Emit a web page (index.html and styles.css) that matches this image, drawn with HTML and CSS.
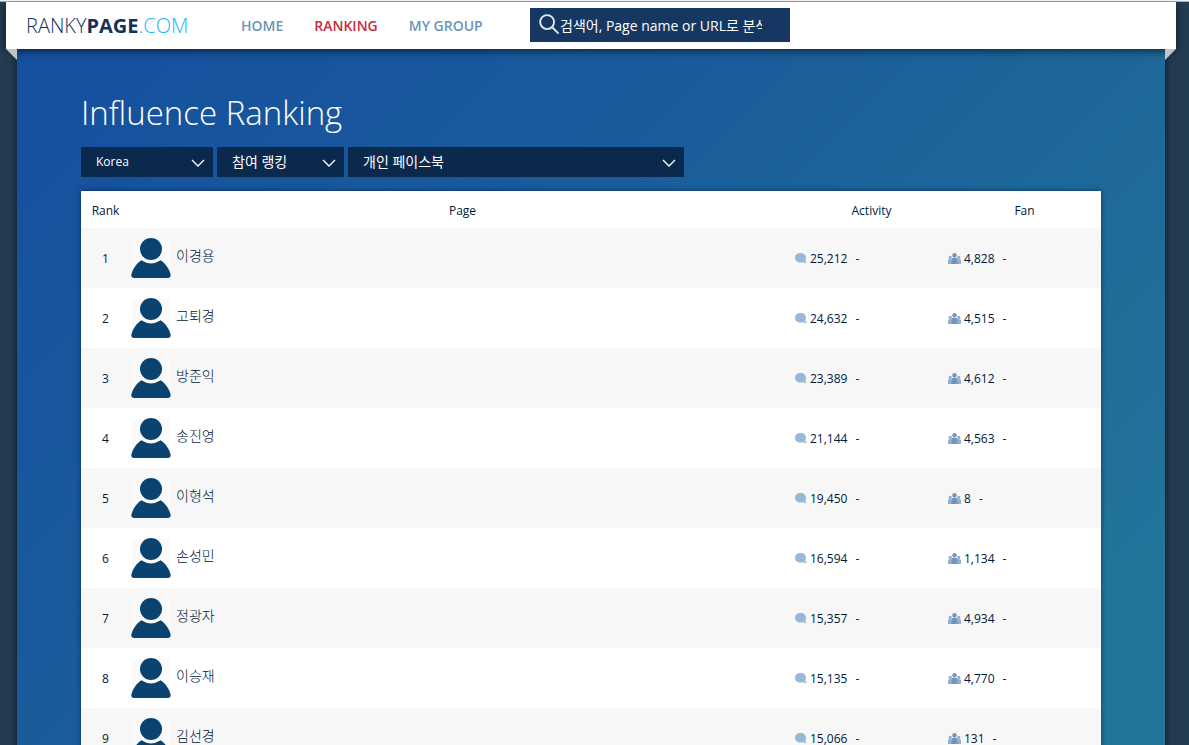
FILE: index.html
```html
<!DOCTYPE html>
<html lang="ko">
<head>
<meta charset="utf-8">
<title>RankyPage.com - Influence Ranking</title>
<link rel="stylesheet" href="styles.css">
</head>
<body>
<svg class="sprite" aria-hidden="true">
  <symbol id="person" viewBox="0 0 40 40">
    <rect width="38" height="40" x="1" y="1" fill="#fafafa"/>
    <circle cx="20" cy="11" r="11"/>
    <path d="M10.300 22.300Q20 28.500 29.700 22.300C35 26 38.500 31.500 39.700 37Q39.900 40 36.500 40H3.500Q.1 40 .3 37C1.500 31.500 5 26 10.300 22.300Z"/>
  </symbol>
  <symbol id="bubble" viewBox="0 0 12 11">
    <path d="M5.500 0C8.700 0 11 2 11 4.700C11 6.200 10.600 7 10 7.800L12 9.800C10.500 10 9 9.800 8 9.200C3.500 10.500 0 8 0 4.700C0 2 2.300 0 5.500 0Z"/>
  </symbol>
  <symbol id="group" viewBox="0 0 13 11">
    <g fill="#94afcd"><circle cx="2.300" cy="4.500" r="1.700"/><circle cx="10.700" cy="4.500" r="1.700"/><path d="M0 11V7.300Q0 6.200 1.200 6.200H4V11ZM9 11V6.200H11.800Q13 6.200 13 7.300V11Z"/></g>
    <circle cx="6.500" cy="2.200" r="2.200"/><path d="M3.600 11V6.500Q3.600 4.800 5.200 4.800H7.800Q9.400 4.800 9.400 6.500V11Z"/>
  </symbol>
  <symbol id="chevron" viewBox="0 0 14 8"><path d="M1 1L7 7L13 1" fill="none" stroke="#fff" stroke-width="1.300"/></symbol>
</svg>
<div class="page">
  <header class="topbar">
    <a class="logo" href="#">RANKY<b>PAGE</b><span class="logo-tld">.COM</span></a>
    <nav class="menu">
      <a href="#">HOME</a>
      <a class="active" href="#">RANKING</a>
      <a href="#">MY GROUP</a>
    </nav>
    <form class="search">
      <svg class="search-icon" viewBox="0 0 22 22" aria-hidden="true"><circle cx="8.500" cy="8.500" r="7.300"/><path d="M13.600 13.600L20.500 20.500"/></svg>
      <input type="text" aria-label="Search" placeholder="검색어, Page name or URL로 분석">
    </form>
  </header>
  <main class="content">
    <h1>Influence Ranking</h1>
    <div class="filters">
      <label class="filter filter-country"><select aria-label="Country"><option>Korea</option></select><svg><use href="#chevron"/></svg></label>
      <label class="filter filter-ranking"><select aria-label="Ranking"><option>참여 랭킹</option></select><svg><use href="#chevron"/></svg></label>
      <label class="filter filter-category"><select aria-label="Category"><option>개인 페이스북</option></select><svg><use href="#chevron"/></svg></label>
    </div>
    <table class="ranking">
      <thead><tr><th class="col-rank">Rank</th><th>Page</th><th class="col-stat">Activity</th><th class="col-stat">Fan</th></tr></thead>
      <tbody>
        <tr><td class="rank">1</td><td><a class="person" href="#"><svg><use href="#person"/></svg><span>이경용</span></a></td><td><span class="stat"><svg class="bubble"><use href="#bubble"/></svg><span>25,212</span><i>-</i></span></td><td><span class="stat"><svg class="group"><use href="#group"/></svg><span>4,828</span><i>-</i></span></td></tr>
        <tr><td class="rank">2</td><td><a class="person" href="#"><svg><use href="#person"/></svg><span>고퇴경</span></a></td><td><span class="stat"><svg class="bubble"><use href="#bubble"/></svg><span>24,632</span><i>-</i></span></td><td><span class="stat"><svg class="group"><use href="#group"/></svg><span>4,515</span><i>-</i></span></td></tr>
        <tr><td class="rank">3</td><td><a class="person" href="#"><svg><use href="#person"/></svg><span>방준익</span></a></td><td><span class="stat"><svg class="bubble"><use href="#bubble"/></svg><span>23,389</span><i>-</i></span></td><td><span class="stat"><svg class="group"><use href="#group"/></svg><span>4,612</span><i>-</i></span></td></tr>
        <tr><td class="rank">4</td><td><a class="person" href="#"><svg><use href="#person"/></svg><span>송진영</span></a></td><td><span class="stat"><svg class="bubble"><use href="#bubble"/></svg><span>21,144</span><i>-</i></span></td><td><span class="stat"><svg class="group"><use href="#group"/></svg><span>4,563</span><i>-</i></span></td></tr>
        <tr><td class="rank">5</td><td><a class="person" href="#"><svg><use href="#person"/></svg><span>이형석</span></a></td><td><span class="stat"><svg class="bubble"><use href="#bubble"/></svg><span>19,450</span><i>-</i></span></td><td><span class="stat"><svg class="group"><use href="#group"/></svg><span>8</span><i>-</i></span></td></tr>
        <tr><td class="rank">6</td><td><a class="person" href="#"><svg><use href="#person"/></svg><span>손성민</span></a></td><td><span class="stat"><svg class="bubble"><use href="#bubble"/></svg><span>16,594</span><i>-</i></span></td><td><span class="stat"><svg class="group"><use href="#group"/></svg><span>1,134</span><i>-</i></span></td></tr>
        <tr><td class="rank">7</td><td><a class="person" href="#"><svg><use href="#person"/></svg><span>정광자</span></a></td><td><span class="stat"><svg class="bubble"><use href="#bubble"/></svg><span>15,357</span><i>-</i></span></td><td><span class="stat"><svg class="group"><use href="#group"/></svg><span>4,934</span><i>-</i></span></td></tr>
        <tr><td class="rank">8</td><td><a class="person" href="#"><svg><use href="#person"/></svg><span>이승재</span></a></td><td><span class="stat"><svg class="bubble"><use href="#bubble"/></svg><span>15,135</span><i>-</i></span></td><td><span class="stat"><svg class="group"><use href="#group"/></svg><span>4,770</span><i>-</i></span></td></tr>
        <tr><td class="rank">9</td><td><a class="person" href="#"><svg><use href="#person"/></svg><span>김선경</span></a></td><td><span class="stat"><svg class="bubble"><use href="#bubble"/></svg><span>15,066</span><i>-</i></span></td><td><span class="stat"><svg class="group"><use href="#group"/></svg><span>131</span><i>-</i></span></td></tr>
      </tbody>
    </table>
  </main>
</div>
</body>
</html>
```
FILE: styles.css
```css
* { box-sizing: border-box; }
html { background: #233c52; }
body {
  margin: 0;
  height: 100vh;
  overflow: hidden;
  border-top: 1px solid #f0f0f0;
  color: #001a38;
  font: 12px/18px "Open Sans", "Noto Sans CJK KR", sans-serif;
}
a { color: inherit; text-decoration: none; }
.sprite { position: absolute; width: 0; height: 0; }
.page {
  border-top: 1px solid #adb3b3;
  padding: 0 13px 0 6px;
}
.topbar {
  position: relative;
  z-index: 1;
  display: flex;
  align-items: center;
  height: 47px;
  padding-left: 20px;
  background: #fff;
  box-shadow: 0 2px 8px rgba(0, 0, 0, .6);
}
.topbar::before,
.topbar::after {
  content: "";
  position: absolute;
  top: 100%;
  width: 11px;
  height: 11px;
  background: #c4c4c4;
}
.topbar::before { left: 0; clip-path: polygon(0 0, 100% 0, 100% 100%); }
.topbar::after { right: 0; clip-path: polygon(0 0, 100% 0, 0 100%); }
.logo {
  width: 215px;
  color: #14305c;
  font-size: 20px;
  line-height: 28px;
  font-weight: 300;
}
.logo b { font-weight: 700; }
.logo-tld { color: #19b5fe; }
.menu { display: flex; gap: 31px; width: 289px; color: #6c93b8; font-size: 14px; font-weight: 600; white-space: nowrap; }
.menu .active { color: #cb2c3c; }
.search {
  display: flex;
  align-items: center;
  width: 260px;
  height: 34px;
  margin-bottom: 2px;
  padding: 0 28px 0 9px;
  background: #163762;
}
.search-icon { flex: none; width: 21px; height: 21px; fill: none; stroke: #e2e8f0; stroke-width: 2; }
.search input {
  flex: 1;
  min-width: 0;
  padding: 2px 0 0;
  border: 0;
  outline: 0;
  background: none;
  color: #fff;
  font: 14px/20px "Open Sans", "Noto Sans CJK KR", sans-serif;
}
.search input::placeholder { color: #fff; opacity: 1; }
.content {
  margin: 0 11px;
  padding: 42px 64px 60px;
  background: linear-gradient(135deg, #154f9f, #195b9b 35%, #227499 85%);
  box-shadow: 0 0 8px rgba(0, 0, 0, .6);
}
h1 {
  margin: 0 0 12px;
  color: #fff;
  font-size: 33px;
  line-height: 44px;
  font-weight: 300;
}
.filters { display: flex; gap: 4px; margin-bottom: 14px; }
.filter { position: relative; height: 30px; }
.filter-country { width: 132px; }
.filter-ranking { width: 127px; }
.filter-category { width: 336px; }
.filter select {
  width: 100%;
  height: 100%;
  padding: 0 32px 0 15px;
  border: 0;
  border-radius: 0;
  appearance: none;
  background: #0b284d;
  color: #fff;
  font: 12px/18px "Open Sans", "Noto Sans CJK KR", sans-serif;
}
.filter-ranking select, .filter-category select { font-size: 14px; }
.filter svg { position: absolute; right: 8px; top: 12px; width: 14px; height: 8px; pointer-events: none; }
.ranking {
  width: 100%;
  border-collapse: collapse;
  table-layout: fixed;
  background: #fff;
  box-shadow: 0 0 5px rgba(0, 0, 0, .5);
}
.ranking th { height: 37px; padding: 2px 0 0; font-weight: 400; }
.col-rank { width: 49px; }
.col-stat { width: 15%; }
.ranking td { height: 60px; padding: 0; }
.ranking tbody tr:nth-child(odd) { background: #f7f7f7; }
.ranking .rank { padding-top: 2px; text-align: center; }
.person { display: flex; gap: 5px; padding-left: 1px; font-size: 14px; font-weight: 300; }
.person svg { width: 40px; height: 40px; fill: #0b4370; }
.person span { padding-top: 8px; line-height: 20px; }
.stat { display: flex; align-items: center; }
.stat svg { height: 11px; margin-right: 3px; }
.stat span, .stat i { padding-top: 2px; }
.bubble { width: 12px; fill: #97b9d9; }
.group { width: 13px; fill: #7295ba; }
.stat i { margin-left: 8px; font-style: normal; }
```
